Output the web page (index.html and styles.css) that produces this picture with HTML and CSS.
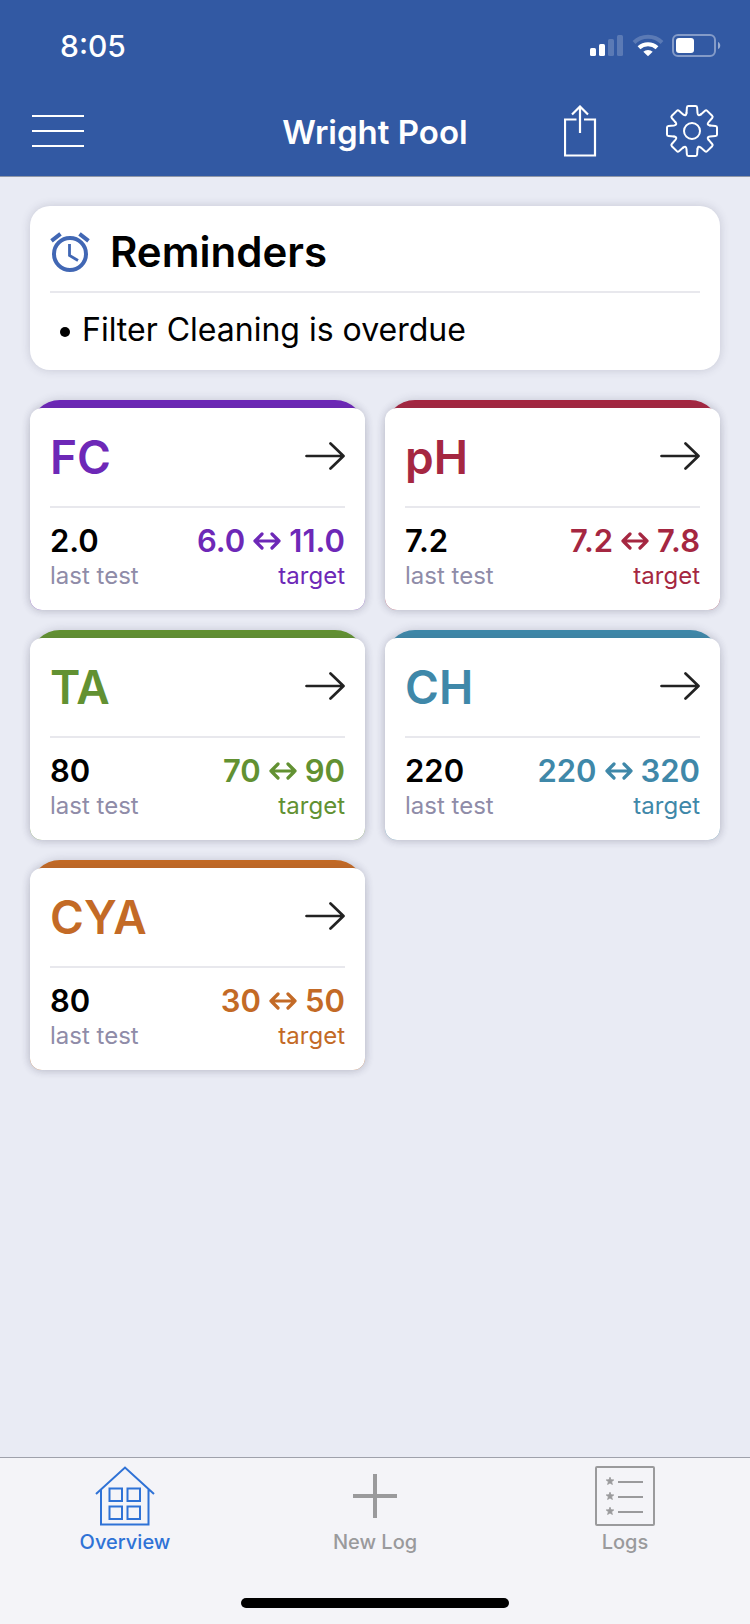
FILE: index.html
```
<!DOCTYPE html>
<html lang="en">
<head>
  <meta charset="UTF-8">
  <meta name="viewport" content="width=device-width, initial-scale=1">
  <title>Wright Pool</title>
  <link rel="stylesheet" href="styles.css">
</head>
<body>

<!-- shared icons -->
<svg class="sprite" aria-hidden="true">
  <symbol id="arrow" viewBox="0 0 40 28">
    <path d="M1.5 14H38M25.5 1.5L38.5 14L25.5 26.5" fill="none" stroke="#222" stroke-width="2.7" stroke-linecap="round" stroke-linejoin="round"/>
  </symbol>
  <symbol id="range" viewBox="0 0 28 18">
    <path d="M2 9H26M9 2L2 9L9 16M19 2L26 9L19 16" fill="none" stroke="currentColor" stroke-width="3.2" stroke-linecap="round" stroke-linejoin="round"/>
  </symbol>
  <symbol id="star" viewBox="0 0 8 8">
    <path d="M4 0.2L5 2.8L7.8 2.9L5.6 4.7L6.4 7.5L4 5.9L1.6 7.5L2.4 4.7L0.2 2.9L3 2.8Z" fill="currentColor"/>
  </symbol>
</svg>

<header class="header">
  <div class="status">
    <span class="time">8:05</span>
    <div class="status-icons">
      <svg width="34" height="24" viewBox="0 0 34 24" fill="#fff">
        <rect x="0" y="14" width="6" height="8" rx="1.5"/>
        <rect x="9" y="10" width="6" height="12" rx="1.5"/>
        <rect x="18" y="5" width="6" height="17" rx="1.5" opacity=".2"/>
        <rect x="27" y="1" width="6" height="21" rx="1.5" opacity=".2"/>
      </svg>
      <svg width="32" height="24" viewBox="0 0 32 24" fill="none" stroke="#fff">
        <path d="M2 8.5A20 20 0 0 1 30 8.5" stroke-width="4" opacity=".2"/>
        <path d="M7 13.8A13 13 0 0 1 25 13.8" stroke-width="4"/>
        <path d="M16 22.2L11.3 17.8A6.8 6.8 0 0 1 20.7 17.8Z" fill="#fff" stroke="none"/>
      </svg>
      <svg width="50" height="24" viewBox="0 0 50 24">
        <rect x="1" y="1" width="42" height="21" rx="5" fill="none" stroke="#fff" stroke-width="2" opacity=".4"/>
        <rect x="4" y="4" width="18" height="15" rx="3" fill="#fff"/>
        <path d="M46 8C49 9 49 14 46 15Z" fill="#fff" opacity=".5"/>
      </svg>
    </div>
  </div>
  <div class="navbar">
    <div class="nav-side">
      <button class="icon-button" aria-label="Menu">
        <svg width="52" height="52" viewBox="0 0 52 52"><path d="M0 11H52M0 26H52M0 41H52" stroke="#fff" stroke-width="2.2"/></svg>
      </button>
    </div>
    <h1 class="title">Wright Pool</h1>
    <div class="nav-side nav-right">
      <button class="icon-button" aria-label="Share">
        <svg width="34" height="52" viewBox="0 0 34 52" fill="none" stroke="#fff" stroke-width="2.2">
          <path d="M12.5 14.5H1V50.5H31V14.5H20"/>
          <path d="M16 28V2M8 9.5L16 1.5L24 9.5"/>
        </svg>
      </button>
      <button class="icon-button" aria-label="Settings">
        <svg width="52" height="52" viewBox="-26 -26 52 52" fill="none" stroke="#fff" stroke-width="2" stroke-linecap="round">
          <path id="tooth" d="M-5.5 -18L-5.1 -23.5Q-5 -25 -3.5 -25H3.5Q5 -25 5.1 -23.5L5.5 -18Q5.9 -14.3 8.8 -16.6"/>
          <use href="#tooth" transform="rotate(45)"/>
          <use href="#tooth" transform="rotate(90)"/>
          <use href="#tooth" transform="rotate(135)"/>
          <use href="#tooth" transform="rotate(180)"/>
          <use href="#tooth" transform="rotate(225)"/>
          <use href="#tooth" transform="rotate(270)"/>
          <use href="#tooth" transform="rotate(315)"/>
          <circle r="8"/>
        </svg>
      </button>
    </div>
  </div>
</header>

<main class="content">
  <section class="reminders">
    <div class="reminders-head">
      <svg width="40" height="40" viewBox="0 0 40 40" fill="none" stroke="#4167b4" stroke-width="4">
        <circle cx="20" cy="22" r="16"/>
        <path d="M1.5 8.8L10.5 1.8M38.5 8.8L29.5 1.8"/>
        <path d="M19.5 12V23.5L28 28.5" stroke-width="2.8"/>
      </svg>
      <h2>Reminders</h2>
    </div>
    <ul class="reminders-list">
      <li>Filter Cleaning is overdue</li>
    </ul>
  </section>

  <div class="cards">
    <section class="card fc">
      <div class="card-body">
        <div class="card-head">
          <h2>FC</h2>
          <a href="#fc" aria-label="FC details"><svg width="40" height="28"><use href="#arrow"/></svg></a>
        </div>
        <div class="values">
          <div><div class="value">2.0</div><div class="label">last test</div></div>
          <div class="target"><div class="value">6.0 <svg width="28" height="18"><use href="#range"/></svg> 11.0</div><div class="label">target</div></div>
        </div>
      </div>
    </section>

    <section class="card ph">
      <div class="card-body">
        <div class="card-head">
          <h2>pH</h2>
          <a href="#ph" aria-label="pH details"><svg width="40" height="28"><use href="#arrow"/></svg></a>
        </div>
        <div class="values">
          <div><div class="value">7.2</div><div class="label">last test</div></div>
          <div class="target"><div class="value">7.2 <svg width="28" height="18"><use href="#range"/></svg> 7.8</div><div class="label">target</div></div>
        </div>
      </div>
    </section>

    <section class="card ta">
      <div class="card-body">
        <div class="card-head">
          <h2>TA</h2>
          <a href="#ta" aria-label="TA details"><svg width="40" height="28"><use href="#arrow"/></svg></a>
        </div>
        <div class="values">
          <div><div class="value">80</div><div class="label">last test</div></div>
          <div class="target"><div class="value">70 <svg width="28" height="18"><use href="#range"/></svg> 90</div><div class="label">target</div></div>
        </div>
      </div>
    </section>

    <section class="card ch">
      <div class="card-body">
        <div class="card-head">
          <h2>CH</h2>
          <a href="#ch" aria-label="CH details"><svg width="40" height="28"><use href="#arrow"/></svg></a>
        </div>
        <div class="values">
          <div><div class="value">220</div><div class="label">last test</div></div>
          <div class="target"><div class="value">220 <svg width="28" height="18"><use href="#range"/></svg> 320</div><div class="label">target</div></div>
        </div>
      </div>
    </section>

    <section class="card cya">
      <div class="card-body">
        <div class="card-head">
          <h2>CYA</h2>
          <a href="#cya" aria-label="CYA details"><svg width="40" height="28"><use href="#arrow"/></svg></a>
        </div>
        <div class="values">
          <div><div class="value">80</div><div class="label">last test</div></div>
          <div class="target"><div class="value">30 <svg width="28" height="18"><use href="#range"/></svg> 50</div><div class="label">target</div></div>
        </div>
      </div>
    </section>
  </div>
</main>

<footer class="footer">
  <nav class="tabs">
    <a class="tab active" href="#overview">
      <svg width="60" height="60" viewBox="0 0 60 60" fill="none" stroke="currentColor" stroke-width="2">
        <path d="M1 28L30 1.5L59 28M6 23.5V58.5H53.5V23.5"/>
        <path d="M14.5 22.5h12.5v12.5h-12.5zM32.5 22.5h12.5v12.5h-12.5zM14.5 40.5h12.5v12.5h-12.5zM32.5 40.5h12.5v12.5h-12.5z"/>
      </svg>
      <span>Overview</span>
    </a>
    <a class="tab" href="#new">
      <svg width="60" height="60" viewBox="0 0 60 60"><path d="M8 30H52M30 8V52" stroke="currentColor" stroke-width="4"/></svg>
      <span>New Log</span>
    </a>
    <a class="tab" href="#logs">
      <svg width="60" height="60" viewBox="0 0 60 60" fill="none" stroke="currentColor" stroke-width="2">
        <rect x="1" y="1" width="58" height="58" rx="1"/>
        <path d="M23 16H48M23 31H48M23 46H48"/>
        <use href="#star" x="11" y="11" width="8" height="8" stroke-width="0.8"/>
        <use href="#star" x="11" y="26" width="8" height="8" stroke-width="0.8"/>
        <use href="#star" x="11" y="41" width="8" height="8" stroke-width="0.8"/>
      </svg>
      <span>Logs</span>
    </a>
  </nav>
  <div class="home-bar"></div>
</footer>

</body>
</html>
```

FILE: styles.css
```
* { box-sizing: border-box; }
body { margin: 0; min-height: 100vh; display: flex; flex-direction: column; background: #e9ebf4; color: #000; font-family: Inter, "Liberation Sans", sans-serif; }
h1, h2, ul { margin: 0; padding: 0; font-weight: 600; }
svg { display: block; }
a { color: inherit; text-decoration: none; }
.sprite { display: none; }

.header { background: #3259a3; color: #fff; border-bottom: 1px solid #8f97a8; }
.status { display: flex; justify-content: space-between; align-items: center; height: 88px; padding: 4px 28px 0 60px; }
.time { font-size: 30px; font-weight: 500; }
.status-icons { display: flex; align-items: center; gap: 8px; }
.navbar { display: flex; align-items: center; height: 88px; padding: 0 32px 2px; }
.nav-side { flex: 1; display: flex; }
.nav-right { justify-content: flex-end; gap: 68px; }
.icon-button { background: none; border: none; padding: 0; cursor: pointer; }
.title { padding-top: 2px; font-size: 33px; line-height: 40px; }

.content { flex: 1; padding: 29px 30px; }
.reminders { background: #fff; border-radius: 20px; padding: 0 20px; box-shadow: 0 0 10px rgba(60, 60, 90, .2); }
.reminders-head { display: flex; align-items: center; gap: 20px; height: 87px; padding-top: 6px; border-bottom: 2px solid #e8e8ed; }
.reminders-head h2 { font-size: 42px; line-height: 50px; }
.reminders-list { height: 77px; padding-left: 10px; list-style: none; font-size: 32px; font-weight: 400; line-height: 74px; }
.reminders-list li { display: flex; align-items: center; gap: 12px; }
.reminders-list li::before { content: ""; width: 10px; height: 10px; margin-top: 4px; border-radius: 50%; background: #000; }

.cards { display: grid; grid-template-columns: 1fr 1fr; gap: 20px; margin-top: 30px; }
.card { padding-top: 8px; border-radius: 30px 30px 12px 12px; background: currentColor; box-shadow: 0 0 10px rgba(60, 60, 90, .2); }
.card-body { background: #fff; border-radius: 12px; padding: 0 20px; box-shadow: 0 0 8px rgba(60, 60, 90, .15); }
.card-head { display: flex; justify-content: space-between; align-items: center; height: 100px; padding-bottom: 2px; border-bottom: 2px solid #e8e8ed; }
.card-head h2 { padding-top: 2px; font-size: 46px; line-height: 56px; }
.values { display: flex; justify-content: space-between; height: 102px; padding-top: 13px; }
.value { display: flex; align-items: center; gap: 8px; color: #000; font-size: 31px; font-weight: 600; line-height: 40px; }
.label { color: #8f8ca8; font-size: 24px; line-height: 30px; }
.target { text-align: right; }
.target .value, .target .label { color: inherit; }

.fc { color: #6d28b7; }
.ph { color: #a52741; }
.ta { color: #629132; }
.ch { color: #3f88a9; }
.cya { color: #c36a26; }

.footer { height: 167px; background: #f4f4f8; border-top: 1px solid #9fa1ab; display: flex; flex-direction: column; align-items: center; justify-content: space-between; padding: 8px 0 16px; }
.tabs { display: flex; width: 100%; }
.tab { flex: 1; display: flex; flex-direction: column; align-items: center; gap: 4px; color: #9a9a9c; font-size: 20px; font-weight: 500; line-height: 24px; }
.active { color: #2f72d6; }
.home-bar { width: 268px; height: 10px; border-radius: 5px; background: #000; }
```
